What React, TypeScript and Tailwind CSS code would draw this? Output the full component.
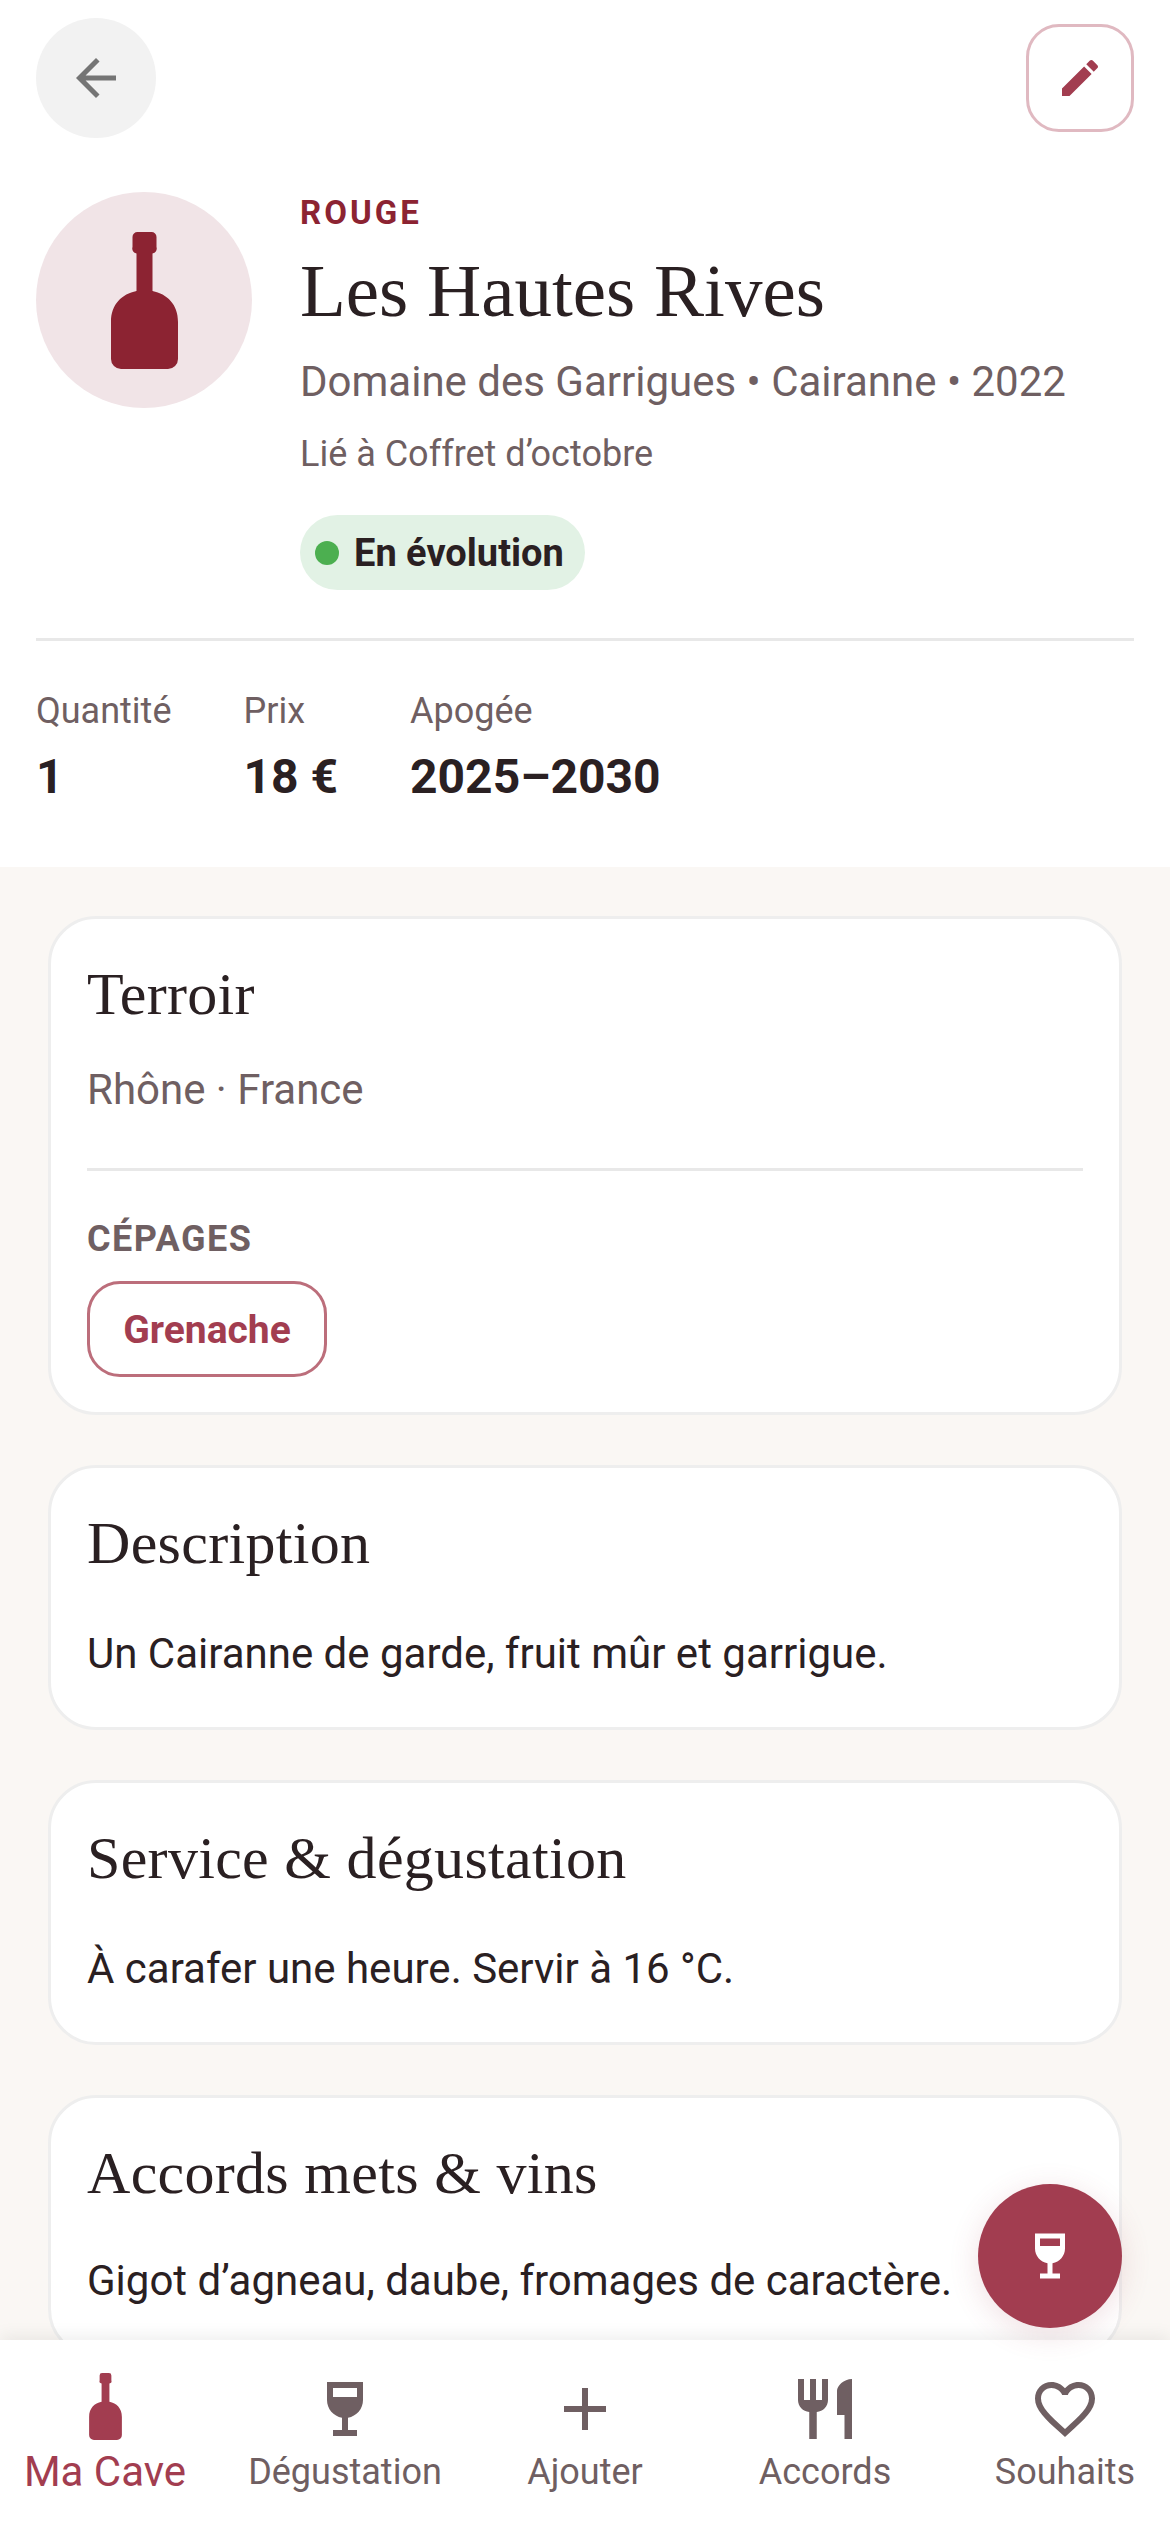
import React from "react";

const P = {
  wine: "M6 3l0 6c0 2.97 2.16 5.43 5 5.91V19H8v2h8v-2h-3v-4.09c2.84-.48 5-2.94 5-5.91l0-6H6zm10 5H8V5h8v3z",
  add: "M19 13h-6v6h-2v-6H5v-2h6V5h2v6h6v2z",
  rest: "M11 9H9V2H7v7H5V2H3v7c0 2.12 1.66 3.84 3.75 3.97V22h2.5v-9.03C11.34 12.84 13 11.12 13 9V2h-2v7zm5-3v8h2.5v8H21V2c-2.76 0-5 2.24-5 4z",
  heart: "M16.5 3c-1.74 0-3.41.81-4.5 2.09C10.91 3.81 9.24 3 7.5 3 4.42 3 2 5.42 2 8.5c0 3.78 3.4 6.86 8.55 11.54L12 21.35l1.45-1.32C18.6 15.36 22 12.28 22 8.5 22 5.42 19.58 3 16.5 3zm-4.4 15.55l-.1.1-.1-.1C7.14 14.24 4 11.39 4 8.5 4 6.5 5.5 5 7.5 5c1.54 0 3.04.99 3.57 2.36h1.87C13.46 5.99 14.96 5 16.5 5c2 0 3.5 1.5 3.5 3.5 0 2.89-3.14 5.74-7.9 10.05z",
  edit: "M3 17.25V21h3.75L17.81 9.94l-3.75-3.75L3 17.25zM20.71 7.04c.39-.39.39-1.02 0-1.41l-2.34-2.34c-.39-.39-1.02-.39-1.41 0l-1.83 1.83 3.75 3.75 1.83-1.83z",
  back: "M20 11H7.83l5.59-5.59L12 4l-8 8 8 8 1.41-1.41L7.83 13H20v-2z",
  bottle: "M26.5 0H40.5a5 5 0 0 1 5 5V15a5 5 0 0 1-4 6.5V59C56 62 67 72 67 90V127a10 10 0 0 1-10 10H10a10 10 0 0 1-10-10V90C0 72 11 62 25.5 59V21.5a5 5 0 0 1-4-6.5V5a5 5 0 0 1 5-5Z",
};

function Icon({ d, className }: { d: string; className: string }) {
  return (
    <svg viewBox="0 0 24 24" fill="currentColor" className={className}>
      <path d={d} />
    </svg>
  );
}

function Bottle({ className }: { className: string }) {
  return (
    <svg viewBox="0 0 67 137" fill="currentColor" className={className}>
      <path d={P.bottle} />
    </svg>
  );
}

function Stat({ label, value }: { label: string; value: string }) {
  return (
    <div className="flex flex-col">
      <span className="text-[36px] leading-[48px] text-[#6f5f62]">{label}</span>
      <span className="mt-[12px] text-[48px] leading-[60px] font-bold text-[#2a2022]">{value}</span>
    </div>
  );
}

function Card({ title, children }: { title: string; children: React.ReactNode }) {
  return (
    <section className="shrink-0 rounded-[48px] border-[3px] border-[#eeeeee] bg-white px-[36px] pt-[36px]">
      <h2 className="font-['Liberation_Serif',serif] text-[60px] tracking-[0.3px] leading-[78px] text-[#2a2022]">{title}</h2>
      {children}
    </section>
  );
}

function NavItem({ label, icon, active }: { label: string; icon: React.ReactNode; active?: boolean }) {
  return (
    <div className={`flex w-[240px] shrink-0 flex-col items-center ${active ? "text-[#a23d50]" : "text-[#6f5f62]"}`}>
      <div className="flex h-[72px] w-[72px] items-center justify-center">{icon}</div>
      <span className={active ? "text-[42px] leading-[54px]" : "text-[36px] leading-[54px]"}>{label}</span>
    </div>
  );
}

export default function App() {
  return (
    <div className="relative flex h-[2532px] w-[1170px] flex-col overflow-hidden bg-white font-['Roboto',sans-serif]">
      <header className="shrink-0 bg-white px-[36px] pt-[18px]">
        <div className="flex items-center justify-between">
          <button className="flex h-[120px] w-[120px] items-center justify-center rounded-full bg-[#f2f2f2] text-[#757575]">
            <Icon d={P.back} className="h-[60px] w-[60px]" />
          </button>
          <button className="flex h-[108px] w-[108px] items-center justify-center rounded-[33px] border-[3px] border-[#e0b9c1] text-[#a23d50]">
            <Icon d={P.edit} className="h-[48px] w-[48px]" />
          </button>
        </div>

        <div className="mt-[54px] flex gap-[48px]">
          <div className="flex h-[216px] w-[216px] shrink-0 items-center justify-center rounded-full bg-[#f1e4e7] text-[#8c2332]">
            <Bottle className="h-[137px] w-[67px]" />
          </div>
          <div className="flex min-w-0 flex-1 flex-col">
            <span className="text-[33px] leading-[42px] font-bold tracking-[3px] text-[#8c2332]">ROUGE</span>
            <h1 className="mt-[12px] font-['Liberation_Serif',serif] text-[75px] leading-[90px] text-[#2a2022]">Les Hautes Rives</h1>
            <p className="mt-[16px] text-[42px] leading-[60px] text-[#6f5f62]">Domaine des Garrigues • Cairanne • 2022</p>
            <p className="mt-[18px] text-[36px] leading-[48px] text-[#6f5f62]">Lié à Coffret d’octobre</p>
            <div className="mt-[37px] flex h-[75px] w-[285px] items-center gap-[15px] rounded-full bg-[#e2f2e5] px-[15px]">
              <span className="h-[24px] w-[24px] rounded-full bg-[#4caf50]" />
              <span className="text-[38px] leading-[48px] font-bold text-[#2a2022]">En évolution</span>
            </div>
          </div>
        </div>

        <div className="mt-[48px] h-[3px] bg-[#e8e8e8]" />

        <div className="flex gap-[72px] pt-[46px] pb-[60px]">
          <Stat label="Quantité" value="1" />
          <Stat label="Prix" value="18 €" />
          <Stat label="Apogée" value="2025–2030" />
        </div>
      </header>

      <main className="flex min-h-0 flex-1 flex-col gap-[50px] overflow-hidden bg-[#faf7f4] px-[48px] pt-[49px]">
        <Card title="Terroir">
          <p className="mt-[27px] text-[42px] leading-[60px] text-[#6f5f62]">Rhône · France</p>
          <div className="mt-[48px] h-[3px] bg-[#e8e8e8]" />
          <p className="mt-[47px] text-[36px] leading-[42px] font-bold tracking-[1.5px] text-[#6f5f62]">CÉPAGES</p>
          <div className="mt-[21px] mb-[35px] flex h-[96px] w-[240px] items-center justify-center rounded-[33px] border-[3px] border-[#bc6e7b] pt-[2px] text-[39px] font-bold text-[#a23d50]">
            Grenache
          </div>
        </Card>
        <Card title="Description">
          <p className="mt-[42px] mb-[43px] text-[42px] leading-[60px] text-[#2a2022]">Un Cairanne de garde, fruit mûr et garrigue.</p>
        </Card>
        <Card title="Service & dégustation">
          <p className="mt-[42px] mb-[43px] text-[42px] leading-[60px] text-[#2a2022]">À carafer une heure. Servir à 16 °C.</p>
        </Card>
        <Card title="Accords mets & vins">
          <p className="mt-[39px] mb-[43px] text-[42px] leading-[60px] text-[#2a2022]">Gigot d’agneau, daube, fromages de caractère.</p>
        </Card>
      </main>

      <nav className="z-10 flex h-[192px] shrink-0 justify-center overflow-hidden bg-white pt-[33px] shadow-[0_-4px_16px_rgba(0,0,0,0.07)]">
        <NavItem active label="Ma Cave" icon={<Bottle className="-mt-[6px] h-[67px] w-[33px]" />} />
        <NavItem label="Dégustation" icon={<Icon d={P.wine} className="h-[72px] w-[72px]" />} />
        <NavItem label="Ajouter" icon={<Icon d={P.add} className="h-[72px] w-[72px]" />} />
        <NavItem label="Accords" icon={<Icon d={P.rest} className="h-[72px] w-[72px]" />} />
        <NavItem label="Souhaits" icon={<Icon d={P.heart} className="h-[72px] w-[72px]" />} />
      </nav>

      <button className="absolute top-[2184px] left-[978px] z-20 flex h-[144px] w-[144px] items-center justify-center rounded-full bg-[#a23d50] text-white shadow-[0_6px_30px_rgba(162,61,80,0.16)]">
        <Icon d={P.wine} className="h-[60px] w-[60px]" />
      </button>
    </div>
  );
}
